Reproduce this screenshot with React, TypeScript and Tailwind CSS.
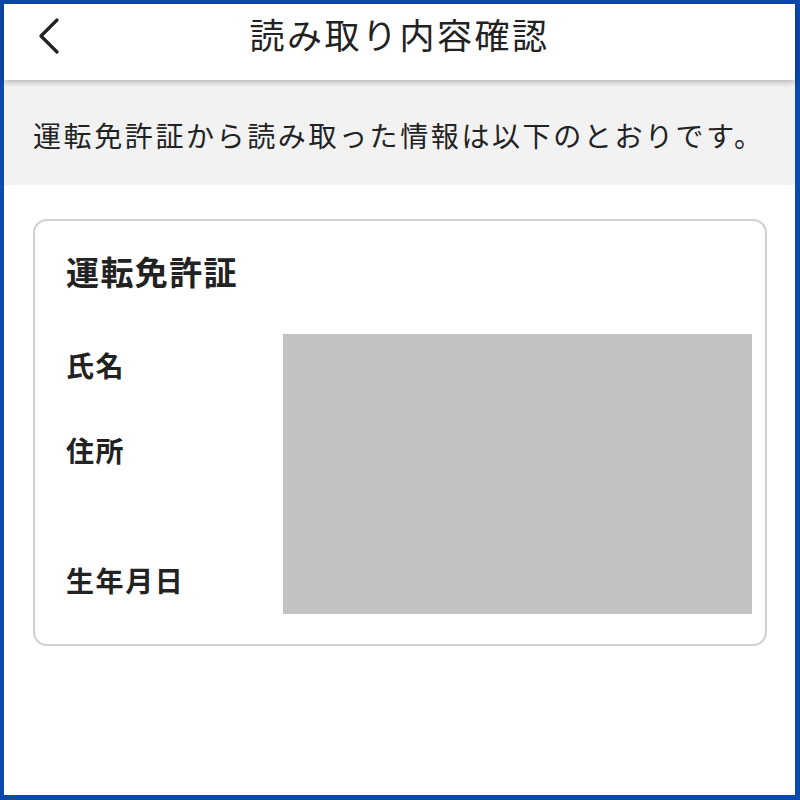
export default function App() {
  const labels = [
    { text: '氏名', cls: 'mt-[17px]' },
    { text: '住所', cls: 'mt-[57px]' },
    { text: '生年月日', cls: 'mt-[102px]' },
  ];

  return (
    <div
      className="w-[800px] h-[800px] bg-white border-t-4 border-l-4 border-r-[5px] border-b-[5px] border-[#0a49ad] flex flex-col text-[#222222]"
      style={{ fontFamily: '"Noto Sans CJK JP", "Noto Sans", sans-serif' }}
    >
      {/* header */}
      <div className="relative z-10 h-[76px] shrink-0 bg-white shadow-[0_2px_6px_rgba(0,0,0,0.28)] grid grid-cols-[1fr_auto_1fr] items-start">
        <div className="pl-[33px] pt-[14px]">
          <svg width="24" height="36" viewBox="0 0 24 36" fill="none">
            <path d="M20 2 L4 18 L20 34" stroke="#222222" strokeWidth="3.2" strokeLinecap="round" strokeLinejoin="round" />
          </svg>
        </div>
        <h1 className="mt-[10px] text-[35px] leading-[40px] font-normal tracking-[2.5px]">読み取り内容確認</h1>
        <div />
      </div>

      {/* notice band */}
      <div className="h-[105px] shrink-0 bg-[#f2f2f2] flex items-center pl-[29px] pt-[4px]">
        <p className="text-[28px] leading-none tracking-[2.6px]">運転免許証から読み取った情報は以下のとおりです。</p>
      </div>

      {/* card */}
      <div className="mt-[34px] ml-[29px] mr-[28px] border-2 border-[#d0d0d0] rounded-[14px] pt-[34px] pl-[31px] pr-[13px] pb-[30px]">
        <h2 className="text-[33px] leading-[33px] font-bold tracking-[1.4px]">運転免許証</h2>
        <div className="mt-[46px] grid grid-cols-[217px_1fr]">
          <div className="flex flex-col">
            {labels.map(l => (
              <span key={l.text} className={`${l.cls} text-[28px] leading-[28px] font-bold tracking-[1.6px]`}>
                {l.text}
              </span>
            ))}
          </div>
          <div className="h-[280px] bg-[#c2c2c2]" />
        </div>
      </div>
    </div>
  );
}
